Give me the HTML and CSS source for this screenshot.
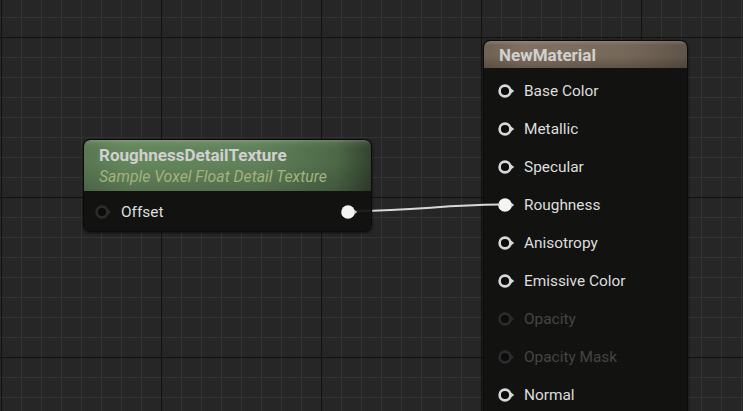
FILE: index.html
```html
<!DOCTYPE html>
<html>
<head>
<meta charset="utf-8">
<link rel="stylesheet" href="styles.css">
</head>
<body>
<div class="canvas">
  <svg class="wire" width="743" height="411" viewBox="0 0 743 411">
    <path d="M356 211 C 420 210.5, 440 205, 500 204.5" fill="none" stroke="#d8d8d8" stroke-width="2"/>
  </svg>

  <div class="node node-tex">
    <div class="head head-green">
      <div class="title">RoughnessDetailTexture</div>
      <div class="subtitle">Sample Voxel Float Detail Texture</div>
    </div>
    <div class="body body-tex">
      <div class="pin-row">
        <svg class="pin" width="18" height="14" viewBox="0 0 18 14"><circle cx="7" cy="7" r="5.4" fill="#0c0c0c" stroke="#2c2c2c" stroke-width="2.6"/><path d="M13 4.4 L16.2 7 L13 9.6Z" fill="#2c2c2c"/></svg>
        <span class="label">Offset</span>
      </div>
      <svg class="pin pin-out" width="18" height="14" viewBox="0 0 18 14"><circle cx="7" cy="7" r="6.8" fill="#f4f4f4"/><path d="M13 4.4 L16.2 7 L13 9.6Z" fill="#cfcfcf"/></svg>
    </div>
  </div>

  <div class="node node-mat">
    <div class="head head-brown">
      <div class="title">NewMaterial</div>
    </div>
    <div class="body body-mat">
      <div class="pin-row"><svg class="pin" width="18" height="14" viewBox="0 0 18 14"><circle cx="7" cy="7" r="5.4" fill="#0c0c0c" stroke="#d8d8d8" stroke-width="2.6"/><path d="M13 4.4 L16.2 7 L13 9.6Z" fill="#d8d8d8"/></svg><span class="label">Base Color</span></div>
      <div class="pin-row"><svg class="pin" width="18" height="14" viewBox="0 0 18 14"><circle cx="7" cy="7" r="5.4" fill="#0c0c0c" stroke="#d8d8d8" stroke-width="2.6"/><path d="M13 4.4 L16.2 7 L13 9.6Z" fill="#d8d8d8"/></svg><span class="label">Metallic</span></div>
      <div class="pin-row"><svg class="pin" width="18" height="14" viewBox="0 0 18 14"><circle cx="7" cy="7" r="5.4" fill="#0c0c0c" stroke="#d8d8d8" stroke-width="2.6"/><path d="M13 4.4 L16.2 7 L13 9.6Z" fill="#d8d8d8"/></svg><span class="label">Specular</span></div>
      <div class="pin-row"><svg class="pin" width="18" height="14" viewBox="0 0 18 14"><circle cx="7" cy="7" r="6.8" fill="#f4f4f4"/><path d="M13 4.4 L16.2 7 L13 9.6Z" fill="#d8d8d8"/></svg><span class="label">Roughness</span></div>
      <div class="pin-row"><svg class="pin" width="18" height="14" viewBox="0 0 18 14"><circle cx="7" cy="7" r="5.4" fill="#0c0c0c" stroke="#d8d8d8" stroke-width="2.6"/><path d="M13 4.4 L16.2 7 L13 9.6Z" fill="#d8d8d8"/></svg><span class="label">Anisotropy</span></div>
      <div class="pin-row"><svg class="pin" width="18" height="14" viewBox="0 0 18 14"><circle cx="7" cy="7" r="5.4" fill="#0c0c0c" stroke="#d8d8d8" stroke-width="2.6"/><path d="M13 4.4 L16.2 7 L13 9.6Z" fill="#d8d8d8"/></svg><span class="label">Emissive Color</span></div>
      <div class="pin-row off"><svg class="pin" width="18" height="14" viewBox="0 0 18 14"><circle cx="7" cy="7" r="5.4" fill="#0c0c0c" stroke="#2c2c2c" stroke-width="2.6"/><path d="M13 4.4 L16.2 7 L13 9.6Z" fill="#2c2c2c"/></svg><span class="label">Opacity</span></div>
      <div class="pin-row off"><svg class="pin" width="18" height="14" viewBox="0 0 18 14"><circle cx="7" cy="7" r="5.4" fill="#0c0c0c" stroke="#2c2c2c" stroke-width="2.6"/><path d="M13 4.4 L16.2 7 L13 9.6Z" fill="#2c2c2c"/></svg><span class="label">Opacity Mask</span></div>
      <div class="pin-row"><svg class="pin" width="18" height="14" viewBox="0 0 18 14"><circle cx="7" cy="7" r="5.4" fill="#0c0c0c" stroke="#d8d8d8" stroke-width="2.6"/><path d="M13 4.4 L16.2 7 L13 9.6Z" fill="#d8d8d8"/></svg><span class="label">Normal</span></div>
    </div>
  </div>
</div>
</body>
</html>
```
FILE: styles.css
```css
html, body {
  margin: 0;
  padding: 0;
  background: #262626;
}
.canvas {
  position: relative;
  width: 743px;
  height: 411px;
  overflow: hidden;
  font-family: Roboto, "Liberation Sans", sans-serif;
  background-color: #262626;
  background-image:
    linear-gradient(to right, #121212 0, #121212 1px, transparent 1px),
    linear-gradient(to bottom, #121212 0, #121212 1px, transparent 1px),
    linear-gradient(to right, #333333 0, #333333 1px, transparent 1px),
    linear-gradient(to bottom, #333333 0, #333333 1px, transparent 1px);
  background-size: 160px 160px, 160px 160px, 20px 20px, 20px 20px;
  background-position: 1px 0, 0 37px, 1px 0, 0 17px;
}
.wire {
  position: absolute;
  left: 0;
  top: 0;
  z-index: 1;
}
.node {
  position: absolute;
  border: 1px solid #0b0b0b;
  border-radius: 7px;
  background: rgba(17, 18, 16, 0.93);
  box-shadow: 0 1px 3px rgba(0,0,0,0.6);
  overflow: hidden;
  z-index: 2;
}
.node-tex {
  left: 83px;
  top: 139px;
  width: 287px;
  height: 91px;
}
.node-mat {
  left: 483px;
  top: 40px;
  width: 203px;
  height: 400px;
  z-index: 0;
}
.head {
  box-sizing: border-box;
  padding-left: 15px;
  border-radius: 6px 6px 0 0;
}
.head-green {
  height: 51px;
  padding-top: 5px;
  background:
    linear-gradient(to bottom, rgba(255,255,255,0.18) 0, rgba(255,255,255,0.05) 3px, transparent 8px),
    linear-gradient(to bottom, transparent 45%, rgba(0,0,0,0.16) 100%),
    linear-gradient(to right, #587752 0%, #65875d 15%, #61825a 60%, #4d6847 88%, #33432f 100%);
}
.head-brown {
  height: 27px;
  padding-top: 4px;
  background:
    linear-gradient(to bottom, rgba(255,255,255,0.14) 0, transparent 4px),
    linear-gradient(to bottom, transparent 55%, rgba(0,0,0,0.2) 100%),
    linear-gradient(to right, #6f6052 0%, #807061 20%, #766859 70%, #605549 100%);
}
.title {
  font-size: 17px;
  font-weight: bold;
  color: #d0d0d0;
  line-height: 20px;
}
.subtitle {
  font-size: 15.8px;
  font-style: italic;
  color: #a1b37f;
  line-height: 19px;
  margin-top: 2px;
}
.body {
  position: relative;
}
.body-tex {
  display: flex;
  align-items: center;
  justify-content: space-between;
  padding: 9px 12px 0 11px;
}
.body-mat {
  display: flex;
  flex-direction: column;
  gap: 14px;
  padding: 11px 0 0 14px;
}
.pin-row {
  display: flex;
  align-items: center;
  height: 24px;
  gap: 8px;
}
.pin {
  display: block;
  flex: none;
}
.label {
  font-size: 15.4px;
  color: #dedede;
  line-height: 18px;
}
.off .label {
  color: #454545;
}
```
